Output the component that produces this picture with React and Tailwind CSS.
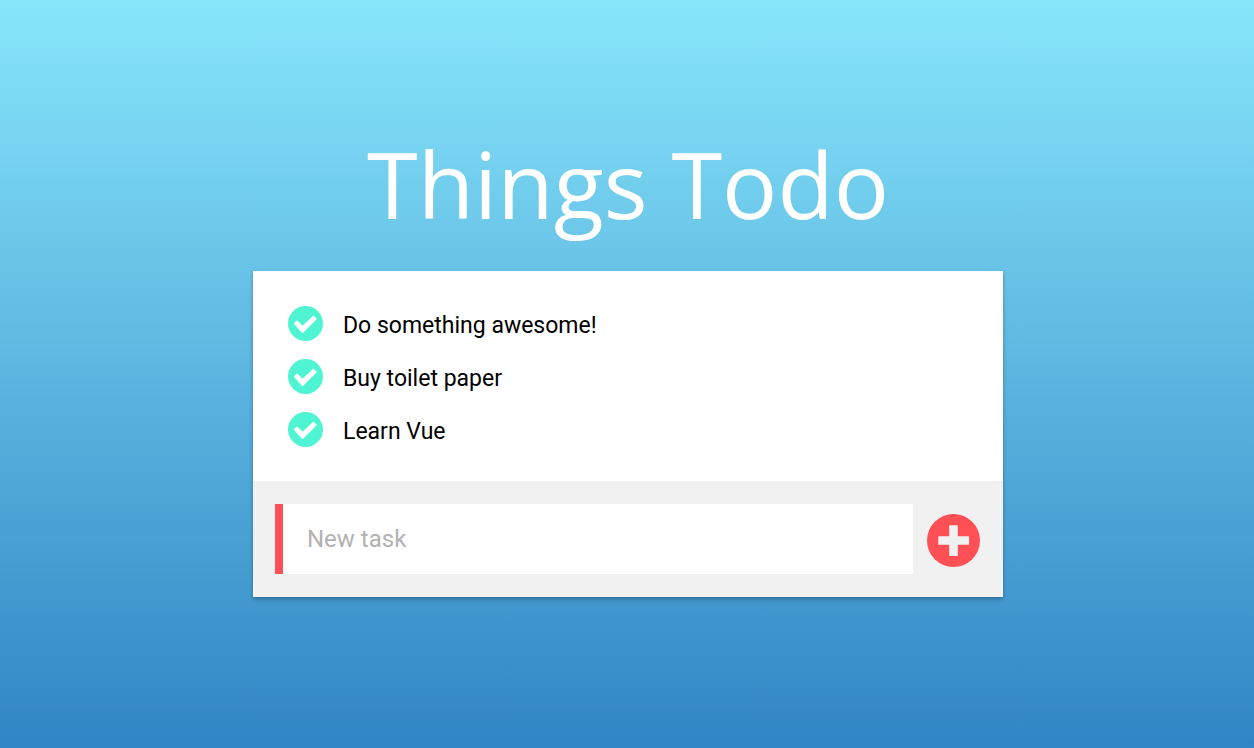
import { useState } from "react";

function CheckIcon() {
  return (
    <svg viewBox="0 0 105 105" className="size-[35px]" aria-hidden="true">
      <circle cx="52.5" cy="52.5" r="52.5" fill="#4ff5d2" />
      <path
        d="M18.500 54 Q17 52.500 18.500 51 L25.500 44.500 Q27 43 28.500 44.500 L43.500 59 L75 30 Q76.500 28.500 78 30 L85.500 37.500 Q87 39 85.500 40.500 L45.500 80.500 Q43.500 82 41.500 80.500 Z"
        fill="#fff"
      />
    </svg>
  );
}

function PlusIcon() {
  return (
    <svg viewBox="0 0 160 160" className="size-[53px]" aria-hidden="true">
      <circle cx="80" cy="80" r="80" fill="#ff5056" />
      <rect x="67" y="34" width="26" height="93" rx="2" fill="#f1f1f1" />
      <rect x="34" y="67" width="93" height="26" rx="2" fill="#f1f1f1" />
    </svg>
  );
}

export default function App() {
  const [tasks, setTasks] = useState([
    "Do something awesome!",
    "Buy toilet paper",
    "Learn Vue",
  ]);
  const [draft, setDraft] = useState("");

  function addTask(event) {
    event.preventDefault();
    const text = draft.trim();
    if (!text) return;
    setTasks([...tasks, text]);
    setDraft("");
  }

  return (
    <main className="flex min-h-screen flex-col items-center justify-center bg-linear-to-b/srgb from-[#88e6fb] to-[#3085c4] pl-0.5 font-[Roboto,sans-serif]">
      <h1 className="mb-[34px] text-center font-['Trebuchet_MS','Open_Sans',sans-serif] text-[92px] leading-[107px] text-white">
        Things Todo
      </h1>
      <section className="mb-[21px] w-full max-w-[750px] bg-white shadow-[0_2px_4px_rgba(0,0,0,0.3)]">
        <ul className="px-[35px] pt-[26px] pb-[25px]">
          {tasks.map((task, index) => (
            <li key={index} className="flex h-[53px] items-center gap-5">
              <button
                type="button"
                aria-label={`Complete ${task}`}
                onClick={() => setTasks(tasks.filter((_, i) => i !== index))}
                className="cursor-pointer"
              >
                <CheckIcon />
              </button>
              <span className="pt-1 text-[23px] leading-8 text-black">{task}</span>
            </li>
          ))}
        </ul>
        <form
          onSubmit={addTask}
          className="flex items-center gap-3.5 bg-[#f1f1f1] py-[23px] pr-[23px] pl-[22px]"
        >
          <input
            type="text"
            aria-label="New task"
            placeholder="New task"
            value={draft}
            onChange={(event) => setDraft(event.target.value)}
            className="h-[70px] min-w-0 flex-1 border-l-8 border-[#ff5056] bg-white px-6 text-2xl text-black outline-none placeholder:text-[#b2b2b2]"
          />
          <button type="submit" aria-label="Add task" className="cursor-pointer pt-0.5">
            <PlusIcon />
          </button>
        </form>
      </section>
    </main>
  );
}
